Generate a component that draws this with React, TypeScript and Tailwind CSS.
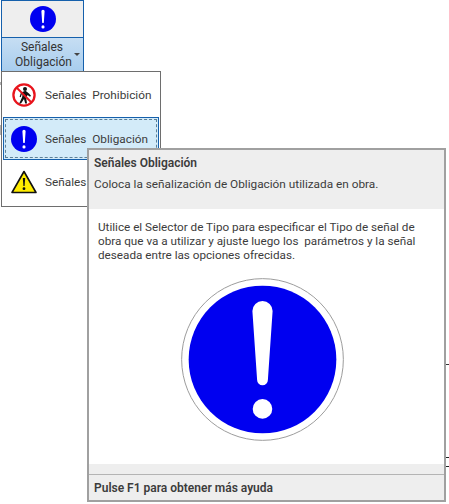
const uiFont = "font-['Roboto','Noto_Sans',sans-serif]";

function MandatorySign({ size, ring = false }: { size: number; ring?: boolean }) {
  return (
    <svg width={size} height={size} viewBox="0 0 100 100" className="shrink-0">
      {ring && <circle cx="50" cy="50" r="49.6" fill="#fff" stroke="#9a9a9a" strokeWidth="0.6" />}
      <circle cx="50" cy="50" r={ring ? 45.3 : 50} fill="#0000f0" />
      <path d="M43.8 20.3a6.2 6.2 0 0 1 12.4 0L53.3 62.5a3.3 3.3 0 0 1-6.6 0Z" fill="#fff" />
      <circle cx="50" cy="80.3" r="6" fill="#fff" />
    </svg>
  );
}

function ProhibitedSign() {
  return (
    <svg width="24" height="24" viewBox="0 0 24 24" className="shrink-0">
      <circle cx="12" cy="12" r="10.6" fill="#fff" stroke="#e8141c" strokeWidth="2.3" />
      <circle cx="13" cy="6" r="2" fill="#111" />
      <path d="M9 9.5l4.5-1.7 3.5 2.7 2 2.2-1 1-2.5-1.7-1.3 3 .8 5.5h-1.8l-1.2-4.6-3 4.6H7.2l3-6.6.4-3-1 .7-.8 2.6-1.2-.4Z" fill="#111" />
      <path d="M4.5 4.5l15 15" stroke="#e8141c" strokeWidth="2" />
    </svg>
  );
}

function WarningSign() {
  return (
    <svg width="26" height="24" viewBox="0 0 26 24" className="shrink-0">
      <path d="M13 1.5 25 22.5H1Z" fill="#ffec00" stroke="#111" strokeWidth="1.6" strokeLinejoin="round" />
      <path d="M11.8 8h2.4l-.6 8h-1.2Z" fill="#111" />
      <circle cx="13" cy="18.7" r="1.4" fill="#111" />
    </svg>
  );
}

function MenuLabel({ text }: { text: string }) {
  return <span className="pt-[2px] text-[11.8px] leading-none text-[#3c3c3c] whitespace-pre">{text}</span>;
}

export default function App() {
  return (
    <div className={`relative w-[449px] h-[504px] bg-white overflow-hidden ${uiFont}`}>
      {/* Ribbon button */}
      <div className="ml-px w-[83px] h-[71px] flex flex-col border border-[#1560ac] border-b-0">
        <div className="h-[37px] bg-[#eeeeee] border-b border-[#1560ac] flex items-center justify-center">
          <MandatorySign size={26} />
        </div>
        <div className="relative flex-1 bg-gradient-to-b from-[#c6def3] to-[#a8cdee] flex flex-col items-center pt-[2px] text-[12px] leading-[15px] text-[#333333]">
          <span className="pr-[1px]">Señales</span>
          <span className="pl-[2px]">Obligación</span>
          <div className="absolute right-[3px] top-[15px] w-0 h-0 border-x-[3px] border-x-transparent border-t-[3px] border-t-[#444444]" />
        </div>
      </div>

      {/* Scraps of the ribbon behind the popups */}
      <div className="absolute left-0 top-[82px] w-px h-[3px] bg-[#b0b0b0]" />
      <div className="absolute left-0 top-[125px] w-px h-[10px] bg-[#b0b0b0]" />
      <div className="absolute left-[446px] top-[364px] w-[3px] h-px bg-[#333333]" />
      <div className="absolute left-[446px] top-[457px] w-[3px] h-px bg-[#222222]" />
      <div className="absolute left-[446px] top-[466px] w-[3px] h-px bg-[#222222]" />

      {/* Dropdown menu */}
      <div className="absolute left-px top-[71px] w-[160px] h-[136px] bg-white border border-[#6e6e6e] p-px flex flex-col">
        <div className="h-[44px] flex items-center gap-[9px] pl-[9px]">
          <ProhibitedSign />
          <MenuLabel text="Señales  Prohibición" />
        </div>
        <div className="h-[43px] border border-[#1560ac] bg-[#d3ebf9] p-px">
          <div className="h-full border border-dashed border-[#5c7f96] flex items-center gap-[8px] pl-[5px]">
            <MandatorySign size={26} />
            <MenuLabel text="Señales  Obligación" />
          </div>
        </div>
        <div className="h-[44px] flex items-center gap-[8px] pl-[8px]">
          <WarningSign />
          <MenuLabel text="Señales" />
        </div>
      </div>

      {/* Tooltip */}
      <div className="absolute left-[87px] top-[148px] w-[359px] h-[354px] bg-white border-2 border-[#a0a0a0] flex flex-col text-[#3c3c3c]">
        <div className="h-[59px] bg-[#eeeeee] pl-[5px] pt-[5px]">
          <p className="text-[12px] leading-[16px] font-semibold">Señales Obligación</p>
          <p className="mt-[5px] text-[11.8px] leading-[16px]">Coloca la señalización de Obligación utilizada en obra.</p>
        </div>
        <div className="flex-1 pl-[9px] pt-[11px] flex flex-col">
          <p className="text-[11.7px] leading-[14px] whitespace-pre">
            {"Utilice el Selector de Tipo para especificar el Tipo de señal de\nobra que va a utilizar y ajuste luego los  parámetros y la señal\ndeseada entre las opciones ofrecidas."}
          </p>
          <div className="mt-[16px] ml-[83px]">
            <MandatorySign size={163} ring />
          </div>
        </div>
        <div className="h-[11px] bg-[#eeeeee] border-b border-[#b4b4b4]" />
        <div className="h-[25px] bg-[#eeeeee] pl-[5px] flex items-center">
          <p className="text-[12px] font-semibold">Pulse F1 para obtener más ayuda</p>
        </div>
      </div>
    </div>
  );
}
